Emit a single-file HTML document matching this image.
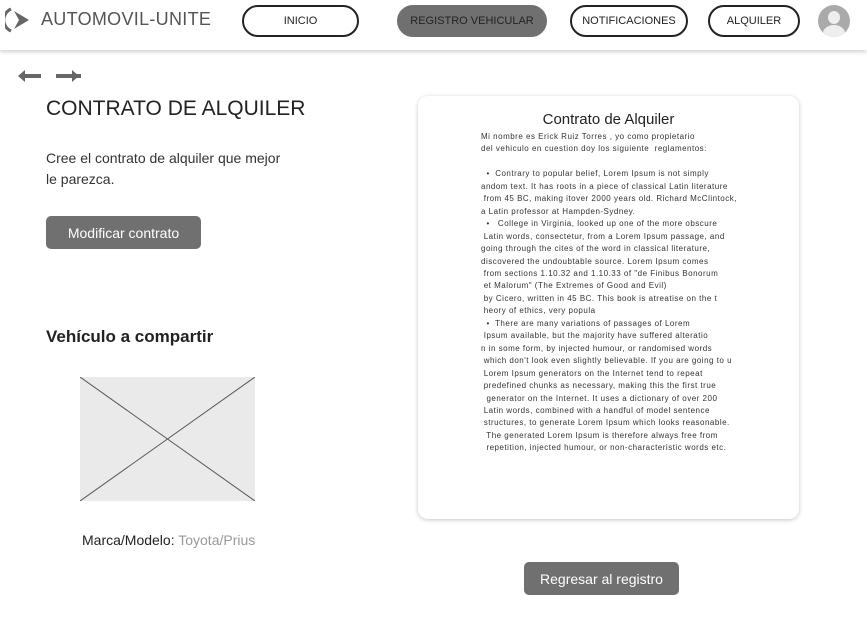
<!DOCTYPE html>
<html><head><meta charset="utf-8"><style>
body{margin:0;width:867px;height:625px;background:#fff;font-family:"Liberation Sans",sans-serif;position:relative;overflow:hidden;color:#222}
.a{position:absolute}
.nav{position:absolute;left:0;top:0;width:867px;height:50px;background:#fff;box-shadow:0 2px 4px rgba(0,0,0,.18)}
.pill{position:absolute;top:5px;height:32px;border:2px solid #222;border-radius:16px;font-size:11px;display:flex;align-items:center;justify-content:center;box-sizing:border-box}
.btn{position:absolute;background:#707070;color:#fff;border-radius:5px;font-size:14px;display:flex;align-items:center;justify-content:center}
.doc{position:absolute;left:418px;top:96px;width:381px;height:423px;border-radius:10px;background:#fff;box-shadow:0 1px 5px rgba(0,0,0,.22)}
.t{position:absolute;left:481px;top:131px;font-size:8px;line-height:12.45px;color:#333;white-space:pre;letter-spacing:.5px}
</style></head><body>
<div class="nav">
<svg class="a" style="left:5px;top:6px" width="28" height="28" viewBox="0 0 28 28"><path d="M6 3 A12 12 0 0 0 6 25" fill="none" stroke="#666" stroke-width="3"/><path d="M9 5 L24 14 L9 23 L14 14Z" fill="#666"/></svg>
<div class="a" style="left:41px;top:9px;font-size:18px;color:#555;letter-spacing:.3px">AUTOMOVIL-UNITE</div>
<div class="pill" style="left:242px;width:117px;">INICIO</div>
<div class="pill" style="left:397px;width:150px;background:#707070;border-color:#707070;color:#222">REGISTRO VEHICULAR</div>
<div class="pill" style="left:570px;width:118px;">NOTIFICACIONES</div>
<div class="pill" style="left:708px;width:92px;">ALQUILER</div>
<div class="a" style="left:818px;top:5px;width:32px;height:32px;border-radius:50%;background:#aaa;overflow:hidden"><div class="a" style="left:10px;top:6px;width:12px;height:13px;border-radius:50%;background:#eee"></div><div class="a" style="left:5px;top:20px;width:22px;height:16px;border-radius:50%;background:#eee"></div></div>
</div>
<svg class="a" style="left:17px;top:69px" width="64" height="14"><path d="M1 7L8 1V5H24V9H8V13Z" fill="#666"/><path d="M79 7" /><path d="M39 7L32 1V5H16" fill="none"/><path d="M63 7L56 1V5H40V9H56V13Z" transform="translate(16 0)" fill="#666"/></svg>
<svg class="a" style="left:56px;top:69px" width="24" height="14"><path d="M23 7L16 1V5H0V9H16V13Z" fill="#666"/></svg>
<div class="a" style="left:46px;top:97px;font-size:21px;color:#222">CONTRATO DE ALQUILER</div>
<div class="a" style="left:46px;top:148px;font-size:14px;line-height:21px;color:#333">Cree el contrato de alquiler que mejor<br>le parezca.</div>
<div class="btn" style="left:46px;top:216px;width:155px;height:33px">Modificar contrato</div>
<div class="a" style="left:46px;top:327px;font-size:17px;font-weight:bold;color:#222">Vehículo a compartir</div>
<svg class="a" style="left:80px;top:377px" width="175" height="124"><rect width="175" height="124" fill="#eaeaea"/><path d="M0 0L175 124M175 0L0 124" stroke="#555" stroke-width="1"/></svg>
<div class="a" style="left:82px;top:532px;font-size:14px;color:#222">Marca/Modelo: <span style="color:#999">Toyota/Prius</span></div>
<div class="doc"></div>
<div class="a" style="left:418px;top:111px;width:381px;text-align:center;font-size:15px;color:#222">Contrato de Alquiler</div>
<div class="t">Mi nombre es Erick Ruiz Torres , yo como propietario
del vehiculo en cuestion doy los siguiente  reglamentos:

  •  Contrary to popular belief, Lorem Ipsum is not simply
andom text. It has roots in a piece of classical Latin literature
 from 45 BC, making itover 2000 years old. Richard McClintock,
a Latin professor at Hampden-Sydney.
  •   College in Virginia, looked up one of the more obscure
 Latin words, consectetur, from a Lorem Ipsum passage, and
going through the cites of the word in classical literature,
discovered the undoubtable source. Lorem Ipsum comes
 from sections 1.10.32 and 1.10.33 of "de Finibus Bonorum
 et Malorum" (The Extremes of Good and Evil)
 by Cicero, written in 45 BC. This book is atreatise on the t
 heory of ethics, very popula
  •  There are many variations of passages of Lorem
 Ipsum available, but the majority have suffered alteratio
n in some form, by injected humour, or randomised words
 which don't look even slightly believable. If you are going to u
 Lorem Ipsum generators on the Internet tend to repeat
 predefined chunks as necessary, making this the first true
  generator on the Internet. It uses a dictionary of over 200
 Latin words, combined with a handful of model sentence
 structures, to generate Lorem Ipsum which looks reasonable.
  The generated Lorem Ipsum is therefore always free from
  repetition, injected humour, or non-characteristic words etc.</div>
<div class="btn" style="left:524px;top:562px;width:155px;height:33px">Regresar al registro</div>
</body></html>
